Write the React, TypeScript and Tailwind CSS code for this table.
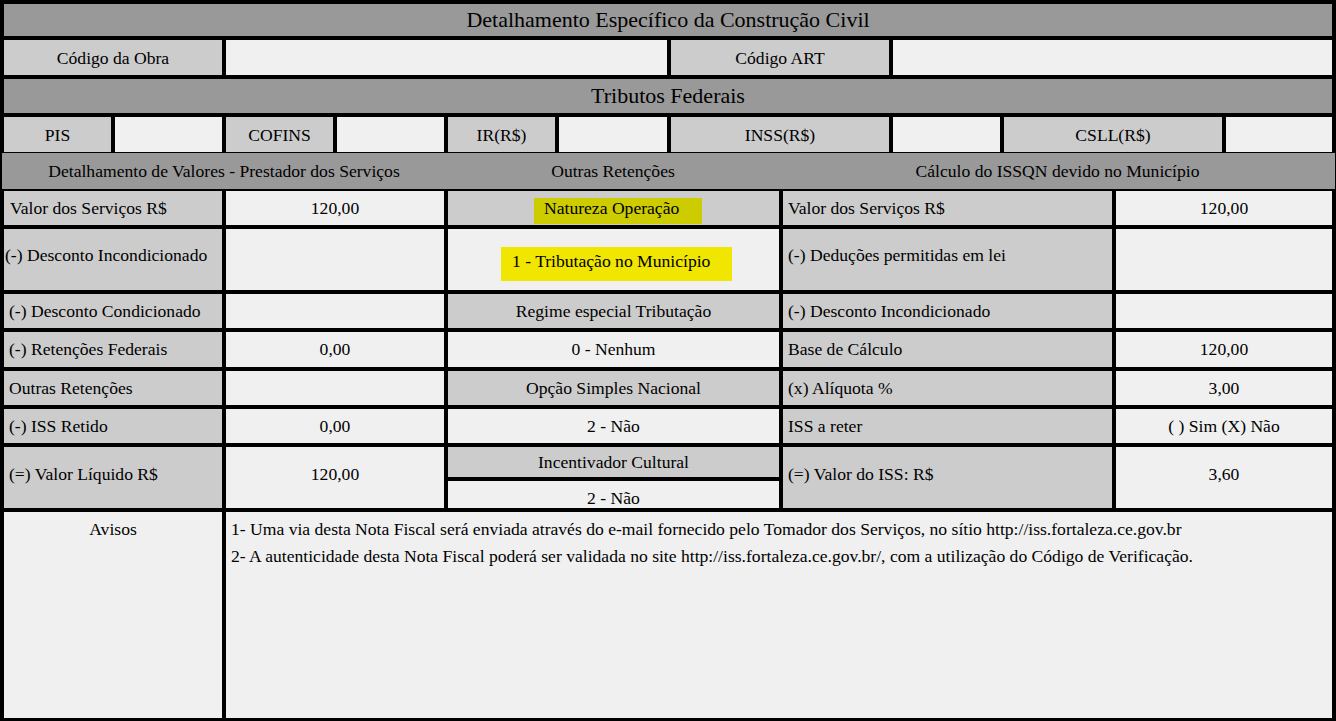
export default function App() {
  return (
    <div className="font-['Liberation_Serif'] w-[1336px] h-[721px] bg-black overflow-hidden flex flex-col text-[17.6px] text-black leading-[20px]">
      <div className="pt-[4px] px-[4px] flex flex-col gap-[4px]">
        <div className="h-[32px] bg-[#999999] flex items-center justify-center text-[22px] leading-[26px]">
          Detalhamento Específico da Construção Civil
        </div>
        <div className="h-[35px] flex gap-[4px]">
          <div className="w-[218px] bg-[#cccccc] flex items-center justify-center">Código da Obra</div>
          <div className="w-[441px] bg-[#f0f0f0]"></div>
          <div className="w-[218px] bg-[#cccccc] flex items-center justify-center">Código ART</div>
          <div className="flex-1 bg-[#f0f0f0]"></div>
        </div>
        <div className="h-[34px] bg-[#999999] flex items-center justify-center text-[22px] leading-[26px]">
          Tributos Federais
        </div>
        <div className="h-[35px] flex gap-[4px]">
          <div className="w-[107px] bg-[#cccccc] flex items-center justify-center">PIS</div>
          <div className="w-[107px] bg-[#f0f0f0]"></div>
          <div className="w-[107px] bg-[#cccccc] flex items-center justify-center">COFINS</div>
          <div className="w-[107px] bg-[#f0f0f0]"></div>
          <div className="w-[107px] bg-[#cccccc] flex items-center justify-center">IR(R$)</div>
          <div className="w-[108px] bg-[#f0f0f0]"></div>
          <div className="w-[218px] bg-[#cccccc] flex items-center justify-center">INSS(R$)</div>
          <div className="w-[107px] bg-[#f0f0f0]"></div>
          <div className="w-[218px] bg-[#cccccc] flex items-center justify-center">CSLL(R$)</div>
          <div className="flex-1 bg-[#f0f0f0]"></div>
        </div>
      </div>

      <div className="mt-[1px] ml-[2px] mr-[1px] h-[36px] bg-[#999999] flex items-center">
        <div className="w-[444px] text-center">Detalhamento de Valores - Prestador dos Serviços</div>
        <div className="w-[334px] text-center">Outras Retenções</div>
        <div className="flex-1 text-center">Cálculo do ISSQN devido no Município</div>
      </div>

      <div className="mt-[2px] px-[4px] flex flex-col gap-[4px]">
        <div className="flex gap-[4px] h-[34px]">
          <div className="w-[218px] bg-[#cccccc] flex items-center pl-[6px] pb-[1px]">Valor dos Serviços R$</div>
          <div className="w-[218px] bg-[#f0f0f0] flex items-center justify-center pb-[1px]">120,00</div>
          <div className="w-[331px] bg-[#cccccc] flex items-start justify-center">
            <div className="mt-[7px] ml-[9px] w-[168px] h-[26px] bg-[#cccc00] pl-[10px] text-left leading-[20px]">Natureza Operação</div>
          </div>
          <div className="w-[329px] bg-[#cccccc] flex items-center pl-[5px] pb-[1px]">Valor dos Serviços R$</div>
          <div className="flex-1 bg-[#f0f0f0] flex items-center justify-center pb-[1px]">120,00</div>
        </div>
        <div className="flex gap-[4px] h-[61px]">
          <div className="w-[218px] bg-[#cccccc] flex items-center pl-[1px] pb-[9px] whitespace-nowrap">(-) Desconto Incondicionado</div>
          <div className="w-[218px] bg-[#f0f0f0]"></div>
          <div className="w-[331px] bg-[#f0f0f0] flex items-start justify-center">
            <div className="mt-[18px] ml-[6px] w-[231px] h-[34px] bg-[#f0e600] pl-[11px] pt-[4px] text-left leading-[20px]">1 - Tributação no Município</div>
          </div>
          <div className="w-[329px] bg-[#cccccc] flex items-center pl-[5px] pb-[9px]">(-) Deduções permitidas em lei</div>
          <div className="flex-1 bg-[#f0f0f0]"></div>
        </div>
        <div className="flex gap-[4px] h-[34px]">
          <div className="w-[218px] bg-[#cccccc] flex items-center pl-[5px]">(-) Desconto Condicionado</div>
          <div className="w-[218px] bg-[#f0f0f0]"></div>
          <div className="w-[331px] bg-[#cccccc] flex items-center justify-center">Regime especial Tributação</div>
          <div className="w-[329px] bg-[#cccccc] flex items-center pl-[5px]">(-) Desconto Incondicionado</div>
          <div className="flex-1 bg-[#f0f0f0]"></div>
        </div>
        <div className="flex gap-[4px] h-[35px]">
          <div className="w-[218px] bg-[#cccccc] flex items-center pl-[5px] pb-[1px]">(-) Retenções Federais</div>
          <div className="w-[218px] bg-[#f0f0f0] flex items-center justify-center pb-[1px]">0,00</div>
          <div className="w-[331px] bg-[#f0f0f0] flex items-center justify-center pb-[1px]">0 - Nenhum</div>
          <div className="w-[329px] bg-[#cccccc] flex items-center pl-[5px] pb-[1px]">Base de Cálculo</div>
          <div className="flex-1 bg-[#f0f0f0] flex items-center justify-center pb-[1px]">120,00</div>
        </div>
        <div className="flex gap-[4px] h-[34px]">
          <div className="w-[218px] bg-[#cccccc] flex items-center pl-[5px]">Outras Retenções</div>
          <div className="w-[218px] bg-[#f0f0f0]"></div>
          <div className="w-[331px] bg-[#cccccc] flex items-center justify-center">Opção Simples Nacional</div>
          <div className="w-[329px] bg-[#cccccc] flex items-center pl-[5px]">(x) Alíquota %</div>
          <div className="flex-1 bg-[#f0f0f0] flex items-center justify-center">3,00</div>
        </div>
        <div className="flex gap-[4px] h-[34px]">
          <div className="w-[218px] bg-[#cccccc] flex items-center pl-[5px]">(-) ISS Retido</div>
          <div className="w-[218px] bg-[#f0f0f0] flex items-center justify-center">0,00</div>
          <div className="w-[331px] bg-[#f0f0f0] flex items-center justify-center">2 - Não</div>
          <div className="w-[329px] bg-[#cccccc] flex items-center pl-[5px]">ISS a reter</div>
          <div className="flex-1 bg-[#f0f0f0] flex items-center justify-center">( ) Sim (X) Não</div>
        </div>
        <div className="flex gap-[4px] h-[61px]">
          <div className="w-[218px] bg-[#cccccc] flex items-center pl-[5px] pb-[8px]">(=) Valor Líquido R$</div>
          <div className="w-[218px] bg-[#f0f0f0] flex items-center justify-center pb-[8px]">120,00</div>
          <div className="w-[331px] flex flex-col gap-[4px]">
            <div className="h-[30px] bg-[#cccccc] flex items-center justify-center pb-[1px]">Incentivador Cultural</div>
            <div className="flex-1 bg-[#f0f0f0] flex items-start justify-center pt-[7px] overflow-hidden">2 - Não</div>
          </div>
          <div className="w-[329px] bg-[#cccccc] flex items-center pl-[5px] pb-[8px]">(=) Valor do ISS: R$</div>
          <div className="flex-1 bg-[#f0f0f0] flex items-center justify-center pb-[8px]">3,60</div>
        </div>
        <div className="flex gap-[4px] h-[206px]">
          <div className="w-[218px] bg-[#f0f0f0] text-center pt-[4px] leading-[27px]">Avisos</div>
          <div className="flex-1 bg-[#f0f0f0] pl-[5px] pt-[4px] leading-[27px]">
            <div>1- Uma via desta Nota Fiscal será enviada através do e-mail fornecido pelo Tomador dos Serviços, no sítio http://iss.fortaleza.ce.gov.br</div>
            <div>2- A autenticidade desta Nota Fiscal poderá ser validada no site http://iss.fortaleza.ce.gov.br/, com a utilização do Código de Verificação.</div>
          </div>
        </div>
      </div>
    </div>
  );
}
